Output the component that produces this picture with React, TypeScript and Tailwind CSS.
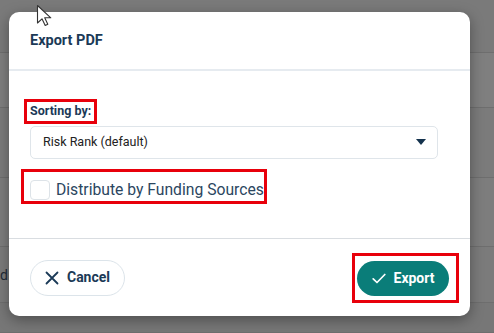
import React from 'react';

const rows = [
  { h: 'h-[53px]', bg: 'bg-[#7a7a7a]' },
  { h: 'h-[55px]', bg: 'bg-[#7f7f7f]' },
  { h: 'h-[70px]', bg: 'bg-[#7b7b7b]' },
  { h: 'h-[69px]', bg: 'bg-[#7d7d7d]' },
  { h: 'h-[56px]', bg: 'bg-[#7b7b7b]' },
  { h: 'h-[30px]', bg: 'bg-[#777777]' },
];

const Cursor: React.FC = () => (
  <svg width="20" height="24" viewBox="0 0 20 24" className="absolute left-[36px] top-[4px]">
    <path
      d="M1.5 1.5 L1.5 19 L6 14.8 L9.2 21.5 L11.8 20.3 L8.7 13.8 L14.8 13.8 Z"
      fill="#fff"
      stroke="#333"
      strokeWidth="1.1"
      strokeLinejoin="round"
    />
  </svg>
);

const App: React.FC = () => {
  return (
    <div
      className="relative w-[494px] h-[333px] overflow-hidden bg-[#7a7a7a]"
      style={{ fontFamily: 'Roboto, "Noto Sans", sans-serif' }}
    >
      {/* page behind the overlay */}
      <div className="flex flex-col">
        {rows.map((r, i) => (
          <div key={i} className={`${r.h} ${r.bg} border-b border-[#6e6e6e] flex items-center`}>
            {i === 4 && <span className="text-[14px] text-[#1f2a36] leading-none">d</span>}
          </div>
        ))}
      </div>

      {/* dialog */}
      <div className="absolute left-[9px] top-[12px] w-[461px] h-[304px] bg-white rounded-[10px] shadow-[0_4px_14px_rgba(0,0,0,0.35)] flex flex-col">
        <div className="h-[59px] flex items-center px-[21px] pt-[1px] border-b-2 border-[#e6ebf0]">
          <h2 className="text-[14.5px] font-bold text-[#1b3a57]">Export PDF</h2>
        </div>

        <div className="flex-1 pt-[27px] pl-[15px]">
          <div className="inline-flex border-[3px] border-[#e8000b] px-[3px] h-[25px] items-center">
            <span className="text-[12.5px] font-bold text-[#1b3a57] leading-none">Sorting by:</span>
          </div>
          <div className="ml-[6px] mt-[2px] w-[408px] h-[33px] border border-[#dfe5ea] rounded-[5px] flex items-center justify-between pl-[12px] pr-[11px]">
            <span className="text-[12.5px] text-[#222]">Risk Rank (default)</span>
            <svg width="10" height="6" viewBox="0 0 10 6">
              <path d="M0 0 L10 0 L5 6 Z" fill="#14324d" />
            </svg>
          </div>
          <div className="-ml-[3px] mt-[10px] w-[246px] h-[35px] border-[3px] border-[#e8000b] flex items-end pb-[1px] pl-[6px]">
            <div className="w-[20px] h-[20px] border border-[#dde3e8] rounded-[4px]" />
            <span className="ml-[6px] text-[15.7px] text-[#2b4660] leading-[20px] whitespace-nowrap">Distribute by Funding Sources</span>
          </div>
        </div>

        <div className="border-t border-[#d9dde1] h-[78px] flex items-center justify-between pl-[21px] pr-[11px]">
          <button className="w-[95px] h-[36px] rounded-full border border-[#dce4ea] flex items-center justify-center gap-[8px] text-[#1b3a57]">
            <svg width="14" height="14" viewBox="0 0 14 14">
              <path d="M1.5 1.5 L12.5 12.5 M12.5 1.5 L1.5 12.5" stroke="#1b3a57" strokeWidth="1.8" strokeLinecap="round" />
            </svg>
            <span className="text-[14px] font-bold">Cancel</span>
          </button>
          <div className="w-[107px] h-[50px] border-[3px] border-[#e8000b] flex items-center pl-[2px] pt-[2px]">
            <button className="w-[92px] h-[35px] rounded-full bg-[#0a7d79] flex items-center justify-center gap-[8px] text-white">
              <svg width="14" height="11" viewBox="0 0 14 11">
                <path d="M1.2 5.8 L5 9.5 L12.8 1.5" stroke="#fff" strokeWidth="1.7" fill="none" strokeLinecap="round" strokeLinejoin="round" />
              </svg>
              <span className="text-[14px] font-bold">Export</span>
            </button>
          </div>
        </div>
      </div>

      <Cursor />
    </div>
  );
};

export default App;
